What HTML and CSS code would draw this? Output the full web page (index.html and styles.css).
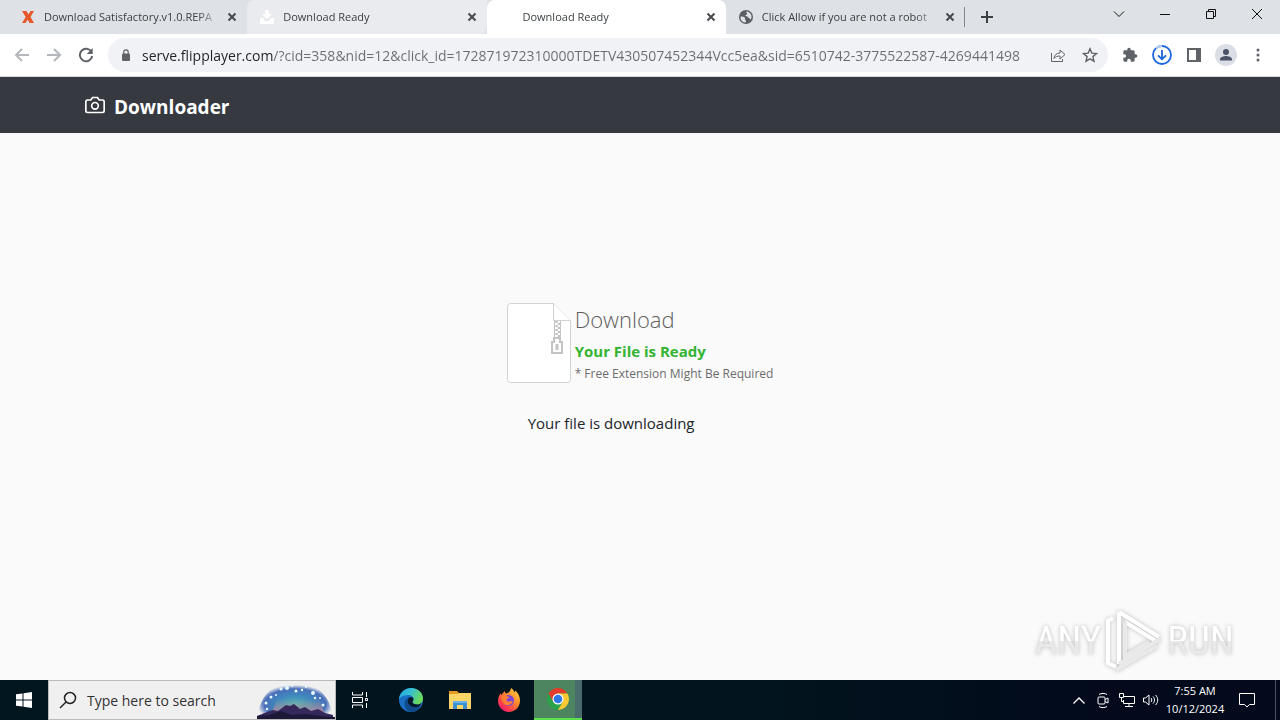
FILE: index.html
```html
<!DOCTYPE html>
<html lang="en">
<head>
    <meta charset="utf-8">
    <meta name="viewport" content="width=device-width, initial-scale=1">
    <title>Download Ready</title>
    <link rel="stylesheet" href="styles.css">
</head>
<body>

<header class="browser">
	<div class="tabstrip">
		<div class="tabs">
			<div class="tab">
				<svg class="favicon" viewBox="0 0 16 16"><path d="M2 2h4.500l2 3.500L10.500 2H14l-3.500 6L14 14H9.500L7.700 10.500 5.500 14H2l3.700-6z" fill="#e8572a"/></svg>
				<a href="#" class="title">Download Satisfactory.v1.0.REPA</a>
				<button class="close" aria-label="Close tab"><svg viewBox="0 0 10 10"><path d="M1.500 1.500l7 7M8.500 1.500l-7 7"/></svg></button>
			</div>
			<div class="tab hover">
				<svg class="favicon" viewBox="0 0 16 16"><path d="M6 1h4v4h3L8 10 3 5h3zM1 9h3l2 3h4l2-3h3v6H1z" fill="#fff"/></svg>
				<a href="#" class="title">Download Ready</a>
				<button class="close" aria-label="Close tab"><svg viewBox="0 0 10 10"><path d="M1.500 1.500l7 7M8.500 1.500l-7 7"/></svg></button>
			</div>
			<div class="tab active">
				<svg class="favicon" viewBox="0 0 16 16"></svg>
				<a href="#" class="title">Download Ready</a>
				<button class="close" aria-label="Close tab"><svg viewBox="0 0 10 10"><path d="M1.500 1.500l7 7M8.500 1.500l-7 7"/></svg></button>
			</div>
			<div class="tab last">
				<svg class="favicon" viewBox="0 0 16 16"><circle cx="8" cy="8" r="7" fill="#5a5e64"/><path d="M2.500 7.500c2 0 4 .3 4.500 1.500s-.5 1.500.5 2.300S8 13.700 7 13.600C4.200 13.200 2.300 10.800 2.500 7.500zM8.300 2.500c2.400 0 4.700 1.700 5.200 4.300.2 1.700-.2 3-1 4-.3-1-.8-1.600-2-1.700-.4-1.400-1.700-1.700-3-2 0-1.200.5-1.700 1.700-1.800.3-1.100-1.200-1.600-.9-2.800z" fill="#dee1e6"/></svg>
				<a href="#" class="title">Click Allow if you are not a robot</a>
				<button class="close" aria-label="Close tab"><svg viewBox="0 0 10 10"><path d="M1.500 1.500l7 7M8.500 1.500l-7 7"/></svg></button>
			</div>
		</div>
		<button class="newtab" aria-label="New tab"><svg viewBox="0 0 12 12"><path d="M6 0v12M0 6h12"/></svg></button>
		<div class="window-buttons">
			<button aria-label="Search tabs"><svg viewBox="0 0 12 12"><path d="M1 3.500l5 5 5-5"/></svg></button>
			<button aria-label="Minimize"><svg viewBox="0 0 12 12"><path d="M1 6.500h10"/></svg></button>
			<button aria-label="Restore"><svg viewBox="0 0 12 12"><path d="M1.500 3.500h7v7h-7zM3.500 3.500v-2h7v7h-2"/></svg></button>
			<button aria-label="Close"><svg viewBox="0 0 12 12"><path d="M1 1l10 10M11 1L1 11"/></svg></button>
		</div>
	</div>

	<div class="toolbar">
		<button class="tool dim" aria-label="Back"><svg viewBox="0 0 16 16"><path d="M15 8H2M8 2L2 8l6 6"/></svg></button>
		<button class="tool dim" aria-label="Forward"><svg viewBox="0 0 16 16"><path d="M1 8h13M8 2l6 6-6 6"/></svg></button>
		<button class="tool" aria-label="Reload"><svg viewBox="0 0 16 16"><path d="M13.500 5A6.200 6.200 0 1 0 14.200 9" stroke-width="2"/><path d="M14.700 1v6h-6z" fill="#5f6368" stroke="none"/></svg></button>
		<div class="omnibox">
			<svg class="lock" viewBox="0 0 10 12"><rect x="1" y="4.500" width="8" height="7.500" rx="1" fill="#5f6368"/><path d="M2.800 5V3a2.200 2.200 0 0 1 4.400 0v2" fill="none" stroke="#5f6368" stroke-width="1.200"/></svg>
			<input class="url" type="text" aria-label="Address" value="serve.flipplayer.com/?cid=358&amp;nid=12&amp;click_id=172871972310000TDETV430507452344Vcc5ea&amp;sid=6510742-3775522587-4269441498">
			<button class="tool" aria-label="Share"><svg viewBox="0 0 16 16" class="thin"><path d="M1.500 6v8.500h11V12M4 11.500C4.300 8 6.500 6 10 6V3l5 4.500-5 4.500V9C7.500 9 5.500 9.500 4 11.500z"/></svg></button>
			<button class="tool" aria-label="Bookmark"><svg viewBox="0 0 16 16"><path d="M8 1.800l1.800 4.300 4.700.4-3.600 3.100 1.100 4.600L8 11.800l-4 2.400 1.100-4.600-3.600-3.100 4.700-.4z" stroke-width="1.400"/></svg></button>
		</div>
		<button class="tool" aria-label="Extensions"><svg viewBox="0 0 24 24"><path d="M20.500 11H19V7a2 2 0 0 0-2-2h-4V3.500a2.500 2.500 0 0 0-5 0V5H4a2 2 0 0 0-2 2v3.800h1.500a2.700 2.700 0 0 1 0 5.400H2V20c0 1.100.9 2 2 2h3.800v-1.500a2.700 2.700 0 0 1 5.400 0V22H17a2 2 0 0 0 2-2v-4h1.500a2.500 2.500 0 0 0 0-5z" fill="#5f6368" stroke="none"/></svg></button>
		<button class="tool" aria-label="Downloads"><svg class="big" viewBox="0 0 20 20"><circle cx="10" cy="10" r="9" stroke="#1a66dc" stroke-width="1.800"/><path d="M4 3.200A9 9 0 0 1 10 1" stroke="#b9cdf5" stroke-width="1.800"/><path d="M10 5v9M6 10.300l4 4 4-4" stroke="#1a66dc" stroke-width="1.800"/></svg></button>
		<button class="tool" aria-label="Side panel"><svg viewBox="0 0 16 16"><path d="M1 1h14v14H1zM3 3v10h7V3z" fill="#5f6368" fill-rule="evenodd" stroke="none"/></svg></button>
		<button class="tool" aria-label="Profile"><svg class="avatar" viewBox="0 0 22 22"><circle cx="11" cy="11" r="11" fill="#dcdee6" stroke="none"/><circle cx="11" cy="8" r="3" fill="#4c5166" stroke="none"/><path d="M5 16.500v-1.300C5 13 9 12 11 12s6 1 6 3.200v1.300z" fill="#4c5166" stroke="none"/></svg></button>
		<button class="tool" aria-label="Menu"><svg viewBox="0 0 16 16"><g fill="#5f6368" stroke="none"><circle cx="8" cy="3" r="1.500"/><circle cx="8" cy="8" r="1.500"/><circle cx="8" cy="13" r="1.500"/></g></svg></button>
	</div>
</header>

<div class="page">
	<nav class="navbar">
		<div class="container">
			<a href="#" class="brand">
				<svg viewBox="0 0 24 24"><path d="M23 19a2 2 0 0 1-2 2H3a2 2 0 0 1-2-2V8a2 2 0 0 1 2-2h4l2-3h6l2 3h4a2 2 0 0 1 2 2z"/><circle cx="12" cy="13" r="4"/></svg>
				<strong>Downloader</strong>
			</a>
		</div>
	</nav>

	<main class="content">
		<div class="box">
			<div class="file">
				<svg class="zip" viewBox="0 0 64 80">
					<path d="M3.500.5h43l17 17v59a3 3 0 0 1-3 3h-57a3 3 0 0 1-3-3v-73a3 3 0 0 1 3-3z" fill="#fff" stroke="#d2d2d2"/>
					<path d="M46.500.5v17h17" fill="#fff" stroke="#d2d2d2"/>
					<path d="M47.500 18v17M53.500 18v17" stroke="#c4c4c4" fill="none"/>
					<path d="M49.500 18v17M52 20v15" stroke="#c4c4c4" stroke-width="2.500" stroke-dasharray="2 2" fill="none"/>
					<path d="M47 35h6v4h2v11H45V39h2z" fill="#fff" stroke="#c4c4c4" stroke-width="2"/>
					<path d="M48.500 41h3v6h-3z" fill="#c4c4c4"/>
				</svg>
				<div class="info">
					<h1>Download</h1>
					<p class="ready">Your File is Ready</p>
					<p class="note">* Free Extension Might Be Required</p>
				</div>
			</div>
			<p class="status">Your file is downloading</p>
		</div>
	</main>

	<div class="watermark">
		<span>ANY</span>
		<svg viewBox="0 0 58 62">
			<path d="M14 2l40 25M14 2v52M20 12l31 19M8 8L3 11v42l8 4" stroke="#fff" stroke-width="4"/>
			<path d="M55 29L14 54M52 36L11 60M20 12v34l24-14" stroke="#e9e9e9" stroke-width="4"/>
		</svg>
		<span>RUN</span>
	</div>
</div>

<footer class="taskbar">
	<button class="start" aria-label="Start"><svg viewBox="0 0 16 16"><path d="M0 2.300L6.500 1.400v6.100H0zM7.500 1.200L16 0v7.500H7.500zM0 8.500h6.500v6.100L0 13.700zM7.500 8.500H16V16l-8.500-1.200z" fill="#fff"/></svg></button>
	<div class="search">
		<svg class="lens" viewBox="0 0 18 18"><circle cx="11" cy="7" r="5.500"/><path d="M7 11l-6 6"/></svg>
		<input type="text" aria-label="Search" placeholder="Type here to search">
		<svg class="scene" viewBox="0 0 78 38">
			<defs>
				<radialGradient id="glow" cx=".5" cy=".6" r=".52">
					<stop offset="0" stop-color="#4fb3b5"/>
					<stop offset=".5" stop-color="#3f86bd"/>
					<stop offset=".8" stop-color="#4a6fb8"/>
					<stop offset="1" stop-color="#f0f0f0"/>
				</radialGradient>
				<linearGradient id="dusk" x1="0" y1="0" x2="0" y2="1">
					<stop offset="0" stop-color="#e8a08c" stop-opacity="0"/>
					<stop offset="1" stop-color="#d98f8d"/>
				</linearGradient>
			</defs>
			<path d="M1 38C1 14 18 1 38 1s37 13 37 37z" fill="url(#glow)"/>
			<path d="M20 18h42l6 16H14z" fill="url(#dusk)" opacity=".8"/>
			<path d="M0 38v-3l10-4 6-2 5 1 8-6 4 1 4-2 6 5 5-2 6 4 7-2 7 4 8 2v2z" fill="#35285a"/>
			<path d="M0 38v-3l12-1 12-4 10 4 16-1 14 2 14 1v2z" fill="#1b1838"/>
			<g fill="#e8fbff"><circle cx="9" cy="22" r="1.500"/><circle cx="14" cy="16" r="1.500"/><circle cx="19" cy="14" r="1"/><circle cx="24" cy="8" r="1.500"/><circle cx="30" cy="7" r="2"/><circle cx="35" cy="5" r="1"/><circle cx="39" cy="10" r="1.500"/><circle cx="45" cy="9" r="1.200"/><circle cx="49" cy="6" r="1"/><circle cx="56" cy="12" r="2"/><circle cx="58" cy="17" r="1.200"/><circle cx="63" cy="17" r="1"/><circle cx="66" cy="24" r="1.500"/><circle cx="10" cy="28" r="1.200"/></g>
		</svg>
	</div>
	<div class="apps">
		<button class="app view" aria-label="Task view"><svg viewBox="0 0 18 18"><path d="M1.500 1v3h10V1M1.500 17v-3h10v3M1.500 6.500h10v5h-10zM15.500 1v5M15.500 12v5M14.500 7.500h2v2h-2z" fill="none" stroke="#fff"/></svg></button>
		<button class="app" aria-label="Edge"><svg viewBox="0 0 24 24">
			<defs>
				<linearGradient id="edge" x1="0" y1="0" x2="1" y2=".4"><stop offset="0" stop-color="#249fe0"/><stop offset=".5" stop-color="#35c1d3"/><stop offset="1" stop-color="#6ad95b"/></linearGradient>
			</defs>
			<circle cx="12" cy="12" r="12" fill="#1a6fc4"/>
			<path d="M0 12C0 5 5.500 0 12 0s12 4.500 12 10.500c0 4-3 6-6 6-2.500 0-4.500-1-4.500-2.500 0-1 1-1.300 1-3C14.500 8.500 12 7 9 7c-5 0-9 3-9 5z" fill="url(#edge)"/>
			<path d="M8.500 13c0-2.500 1.500-4 3.500-4 1.500 0 2.500 1 2.500 2.200 0 1.500-1 1.800-1 2.800 0 1.500 2 2.500 4.500 2.500 2 0 3.500-.7 4.500-1.500-1 3-3 4.500-5.500 4.500-4.500 0-8.500-2.500-8.500-6.500z" fill="#04192b"/>
			<path d="M8.500 13c0 4 4 6.500 8.500 6.500 2 0 3.700-.8 4.700-2-2 4-5.700 6.500-9.700 6.500-4-1-6.500-4.500-6.500-8 0-4 2.500-6.500 6-7-2 .5-3 2-3 4z" fill="#114a8b"/>
		</svg></button>
		<button class="app" aria-label="File Explorer"><svg viewBox="0 0 24 24"><path d="M1 3h8l2 2h12v5H1z" fill="#e39a27"/><path d="M1 6h9l1-1h12v16H1z" fill="#fbd566"/><path d="M5 21v-8h14v8h-4v-4H9v4z" fill="#3c90d2"/><path d="M5 13h14v2H5z" fill="#65b4e8"/></svg></button>
		<button class="app" aria-label="Firefox"><svg viewBox="0 0 24 24">
			<defs><linearGradient id="fox" x1="1" y1="0" x2=".2" y2="1"><stop offset="0" stop-color="#ffe245"/><stop offset=".45" stop-color="#ff8b2c"/><stop offset=".8" stop-color="#ff3750"/><stop offset="1" stop-color="#e51d80"/></linearGradient></defs>
			<path d="M14 0c2 1 3 3 3.500 4.500C18 4 18 3 18 2.500c3 2 5 6 5 10C23 19 18 24 12 24S1 19 1 13c0-3 1-6 3-8 0 1 0 1.500.5 2C5.500 5 7 4 8 3c0 1 .3 2 1 2.500 2-.5 4-1 5-5.500z" fill="url(#fox)"/>
			<circle cx="11.500" cy="12.500" r="5.500" fill="#7a45d8"/>
			<path d="M4.500 8c2-1 4-1 5 0 1 .7 2 .5 3 1-.5 1.500-3 1.500-3 3 0 1.500 2 2 4 1.200 1.500-.5 2.500.3 2 1-1 2-3.500 3.300-5.500 3C7 17 4 13 4.500 8z" fill="#ff7f30"/>
		</svg></button>
		<button class="app open" aria-label="Chrome"><svg viewBox="0 0 24 24"><circle cx="12" cy="12" r="11" fill="#2ba24c"/><path d="M2.500 6.500A11 11 0 0 1 21.500 6.500H12L7.200 14.800z" fill="#e33b2e"/><path d="M21.500 6.500A11 11 0 0 1 12 23l4.800-8.200L12 6.500z" fill="#fcc934"/><circle cx="12" cy="12" r="5.500" fill="#fff"/><circle cx="12" cy="12" r="4.300" fill="#2d78e6"/></svg></button>
	</div>
	<div class="tray">
		<button class="tray-icon" aria-label="Show hidden icons"><svg viewBox="0 0 16 16"><path d="M2.500 11.500L8 6l5.500 5.500" stroke-width="1.300"/></svg></button>
		<button class="tray-icon" aria-label="Meet now"><svg viewBox="0 0 16 16"><rect x="3" y="5" width="7" height="7" rx="1"/><path d="M10 7.500l3-1.500v5l-3-1.500M4 2.500c2.500-1.500 5.500-1.500 8 0M4 14.500c2.500 1.500 5.500 1.500 8 0"/></svg></button>
		<button class="tray-icon" aria-label="Network"><svg viewBox="0 0 16 16"><path d="M5 4.500h10.500v7H4.500V8M10 11.500v3M6 14.500h8M.5 1.500h4v4h-4zM2.500 5.500v4h2"/></svg></button>
		<button class="tray-icon" aria-label="Volume"><svg viewBox="0 0 16 16"><path d="M.5 6h2L6 3v10L2.500 10h-2zM8 6c1 1 1 3 0 4M10 4.500c2 2 2 5 0 7M12.500 3c3 3 3 7 0 10"/></svg></button>
		<time class="clock">7:55 AM<br>10/12/2024</time>
		<button class="notify" aria-label="Notifications"><svg viewBox="0 0 16 16"><path d="M.5 1.500h15v11h-5L8 15l-2.500-2.500h-5z"/></svg></button>
		<button class="desktop" aria-label="Show desktop"></button>
	</div>
</footer>

</body>
</html>
```
FILE: styles.css
```css
* { box-sizing: border-box; margin: 0 }

body {
	display: flex;
	flex-direction: column;
	min-height: 100vh;
	font-family: "Open Sans", "Noto Sans", sans-serif;
	font-size: 12px;
	color: #212529;
	background: #fafafa;
}

button {
	display: flex;
	align-items: center;
	justify-content: center;
	flex: none;
	padding: 0;
	border: 0;
	background: none;
}

input {
	min-width: 0;
	padding: 0;
	border: 0;
	outline: 0;
	background: none;
	font-family: inherit;
}

a { color: inherit; text-decoration: none }

svg { display: block; flex: none }

/* tabs */
.tabstrip {
	display: flex;
	height: 34px;
	background: #dee1e6;
}

.tabs {
	display: flex;
	flex: 0 1 965px;
	min-width: 0;
	padding-left: 8px;
}

.tab {
	display: flex;
	align-items: center;
	flex: 1 1 0;
	min-width: 0;
	gap: 8px;
	padding: 0 10px 0 12px;
	color: #3c4043;
}

.hover { background: #e9ebee; border-radius: 8px 0 8px 0 }
.active { background: #fff; border-radius: 8px 8px 0 0 }
.last { background: linear-gradient(#80868b, #80868b) right / 1px 20px no-repeat }

.favicon { width: 16px; height: 16px }

.title {
	flex: 1;
	overflow: hidden;
	white-space: nowrap;
	font-size: 11px;
	line-height: 16px;
	-webkit-mask-image: linear-gradient(to right, #000 88%, transparent);
	mask-image: linear-gradient(to right, #000 88%, transparent);
}

.close svg { width: 10px; height: 10px; stroke: #45494d; stroke-width: 2 }

.newtab { width: 44px }
.newtab svg { width: 12px; height: 12px; stroke: #3c4043; stroke-width: 2 }

.window-buttons { display: flex; margin-left: auto }
.window-buttons button { width: 46px; height: 28px }
.window-buttons svg { width: 12px; height: 12px; fill: none; stroke: #111 }

/* toolbar */
.toolbar {
	display: flex;
	align-items: center;
	height: 43px;
	padding: 0 6px;
	background: #fff;
	border-bottom: 1px solid #d5d8dc;
}

.tool { width: 32px; height: 32px }
.tool svg { width: 16px; height: 16px; fill: none; stroke: #5f6368; stroke-width: 2 }
.tool .thin { stroke-width: 1 }
.tool .big { width: 20px; height: 20px }
.tool .avatar { width: 22px; height: 22px }
.dim svg { stroke: #b4b7bb }

.omnibox {
	display: flex;
	align-items: center;
	flex: 1;
	min-width: 0;
	height: 34px;
	margin: 0 6px;
	padding: 0 2px 0 13px;
	border-radius: 17px;
	background: #f0f2f5;
}

.lock { width: 10px; height: 12px; margin-right: 11px }

/* host part is darker than the query */
.url {
	flex: 1;
	height: 24px;
	font-size: 14px;
	color: transparent;
	background: linear-gradient(to right, #202124 131px, #686d72 131px);
	-webkit-background-clip: text;
	background-clip: text;
}

/* page */
.page {
	position: relative;
	display: flex;
	flex-direction: column;
	flex: 1;
}

.navbar { background: #363940 }

.container {
	max-width: 1140px;
	margin: 0 auto;
	padding: 0 15px;
}

.brand {
	display: inline-flex;
	align-items: center;
	gap: 9px;
	height: 56px;
	font-size: 19px;
	color: #fff;
}

.brand strong { padding-top: 3px }

.brand svg {
	width: 20px;
	height: 20px;
	fill: none;
	stroke: #fff;
	stroke-width: 2;
}

.content {
	display: flex;
	justify-content: center;
	padding-top: 170px;
}

.file { display: flex; gap: 4px }

.zip { width: 64px; height: 80px }

h1 {
	font-size: 22px;
	font-weight: 300;
	line-height: 32px;
	color: #5f5f5f;
}

.ready {
	margin-top: 4px;
	font-size: 15px;
	font-weight: 700;
	line-height: 24px;
	color: #32b432;
}

.note { line-height: 22px; color: #6c6c6c }

.status {
	margin-top: 26px;
	padding-left: 21px;
	font-size: 15px;
	line-height: 24px;
}

.watermark {
	position: absolute;
	right: 46px;
	bottom: 8px;
	display: flex;
	align-items: center;
	gap: 4px;
	font-family: "Liberation Sans Narrow", "Roboto Condensed", "Liberation Sans", sans-serif;
	font-size: 39px;
	line-height: 62px;
	filter: drop-shadow(0 0 2px #bbb);
}

.watermark span {
	color: transparent;
	background: linear-gradient(#fff 50%, #e9e9e9 50%);
	-webkit-background-clip: text;
	background-clip: text;
}

.watermark svg { width: 58px; height: 62px; fill: none }

/* taskbar */
.taskbar {
	display: flex;
	height: 40px;
	background: linear-gradient(to right, #02161f, #02141d 60%, #020a1c 85%);
	color: #fff;
}

.start { width: 48px }
.start svg { width: 16px; height: 16px }

.search {
	display: flex;
	align-items: center;
	width: 288px;
	padding-left: 10px;
	background: #f0f0f0;
	border: 1px solid #bbb;
}

.search .lens { width: 18px; height: 18px; fill: none; stroke: #222; stroke-width: 1.5 }
.search input { flex: 1; margin-left: 10px; font-size: 14px }
.search input::placeholder { color: #333; opacity: 1 }
.scene { width: 78px; height: 38px }

.apps { display: flex; gap: 1px }
.app { width: 48px }
.app svg { width: 24px; height: 24px }
.view { margin-right: 2px }
.view svg { width: 18px; height: 18px }

.open {
	background: linear-gradient(to right, #4d8560 41px, #4a6b6c 41px);
	border-bottom: 2px solid #5ae04a;
}

.tray { display: flex; align-items: center; margin-left: auto }
.tray svg { width: 16px; height: 16px; fill: none; stroke: #fff }
.tray-icon { width: 24px; height: 40px }

.clock {
	width: 64px;
	font-size: 11px;
	line-height: 18px;
	text-align: center;
}

.notify { width: 40px; height: 40px }

.desktop {
	width: 5px;
	height: 40px;
	margin-left: 8px;
	border-left: 1px solid #4a5260;
}
```
